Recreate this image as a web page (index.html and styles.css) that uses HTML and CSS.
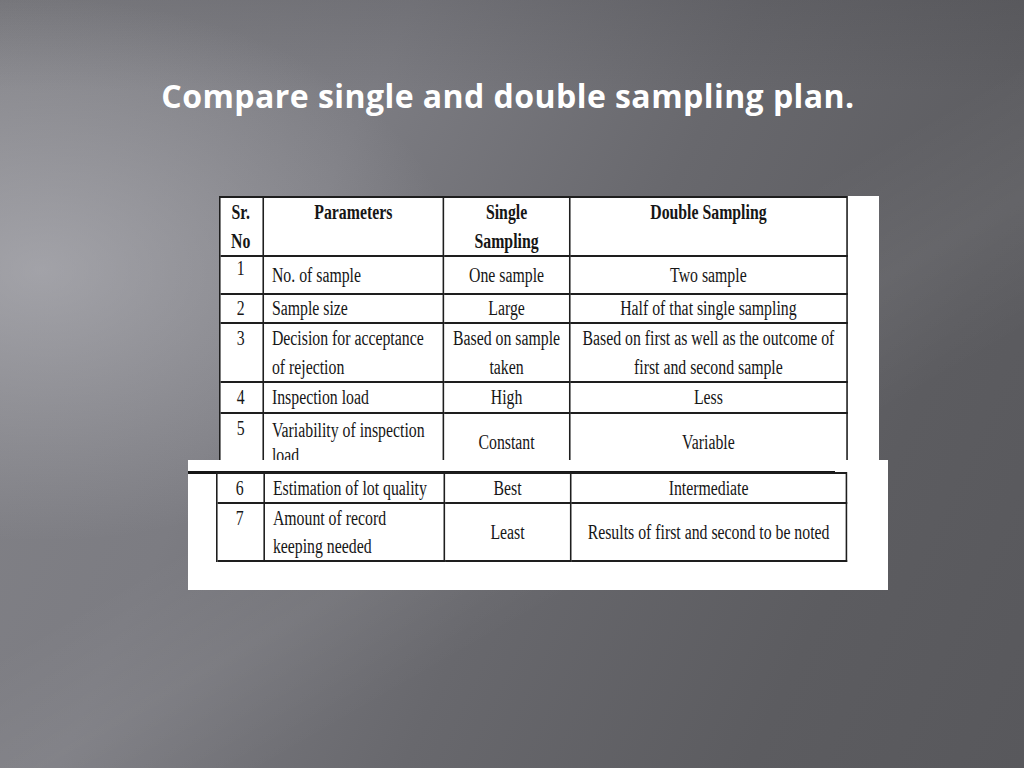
FILE: index.html
```html
<!DOCTYPE html>
<html lang="en">
<head>
<meta charset="utf-8">
<title>Compare single and double sampling plan.</title>
<link rel="stylesheet" href="styles.css">
</head>
<body>
<main class="slide">
  <h1 class="title">Compare single and double sampling plan.</h1>
  <div class="figure">
    <div class="panel panel-top">
      <table class="grid grid-top">
        <colgroup>
          <col class="c-no"><col class="c-param"><col class="c-single"><col class="c-double">
        </colgroup>
        <tr class="r-head">
          <th class="num">Sr.<br>No</th>
          <th>Parameters</th>
          <th>Single<br>Sampling</th>
          <th>Double Sampling</th>
        </tr>
        <tr class="r-38">
          <td class="num">1</td>
          <td class="param">No. of sample</td>
          <td>One sample</td>
          <td>Two sample</td>
        </tr>
        <tr class="r-29">
          <td class="num">2</td>
          <td class="param">Sample size</td>
          <td>Large</td>
          <td>Half of that single sampling</td>
        </tr>
        <tr class="r-59">
          <td class="num">3</td>
          <td class="param">Decision for acceptance<br>of rejection</td>
          <td>Based on sample<br>taken</td>
          <td>Based on first as well as the outcome of<br>first and second sample</td>
        </tr>
        <tr class="r-31">
          <td class="num">4</td>
          <td class="param">Inspection load</td>
          <td>High</td>
          <td>Less</td>
        </tr>
        <tr class="r-58 r-tight">
          <td class="num">5</td>
          <td class="param">Variability of inspection<br>load</td>
          <td>Constant</td>
          <td>Variable</td>
        </tr>
      </table>
    </div>
    <div class="panel panel-bottom">
      <div class="rule"></div>
      <table class="grid grid-bottom">
        <colgroup>
          <col class="c-no2"><col class="c-param"><col class="c-single"><col class="c-double2">
        </colgroup>
        <tr class="r-30 r-28">
          <td class="num">6</td>
          <td class="param">Estimation of lot quality</td>
          <td>Best</td>
          <td>Intermediate</td>
        </tr>
        <tr class="r-58 r-28">
          <td class="num">7</td>
          <td class="param">Amount of record<br>keeping needed</td>
          <td>Least</td>
          <td>Results of first and second to be noted</td>
        </tr>
      </table>
    </div>
  </div>
</main>
</body>
</html>
```

FILE: styles.css
```css
* { box-sizing: border-box; }

html, body {
  margin: 0;
  padding: 0;
}

body {
  width: 1024px;
  height: 768px;
  overflow: hidden;
  background:
    radial-gradient(ellipse 520px 340px at 40px 270px, rgba(196, 196, 202, 0.5), rgba(196, 196, 202, 0) 80%),
    linear-gradient(150deg, rgba(255, 255, 255, 0) 48%, rgba(255, 255, 255, 0.05) 58%, rgba(255, 255, 255, 0) 68%),
    linear-gradient(180deg, rgba(60, 60, 64, 0.18) 0%, rgba(60, 60, 64, 0) 12%),
    linear-gradient(115deg, #838388 0%, #7c7c82 30%, #68686d 55%, #5c5c60 80%, #58585c 100%);
}

.slide {
  width: 1024px;
  height: 768px;
  display: flex;
  flex-direction: column;
}

.title {
  margin: 76px 0 0 0;
  padding-right: 8px;
  text-align: center;
  font-family: "Open Sans", "Noto Sans", sans-serif;
  font-weight: 700;
  font-size: 32px;
  letter-spacing: 0.45px;
  line-height: 40px;
  color: #ffffff;
}

.figure {
  margin-top: 80px;
  display: flex;
  flex-direction: column;
}

.panel {
  background: #ffffff;
  overflow: hidden;
}

.panel-top {
  margin-left: 219px;
  width: 660px;
  height: 264px;
}

.panel-bottom {
  margin-left: 188px;
  width: 700px;
  height: 130px;
  padding-top: 11px;
}

.rule {
  width: 647px;
  height: 3px;
  background: #161616;
  margin-bottom: -2px;
}

.grid {
  border-collapse: separate;
  border-spacing: 0;
  table-layout: fixed;
  border-left: 2px solid #1e1e1e;
  border-top: 2px solid #1e1e1e;
  transform: scaleX(0.79);
  transform-origin: 0 0;
  font-family: "Liberation Serif", "Times New Roman", serif;
  font-size: 20px;
  line-height: 28.5px;
  color: #161616;
}

.grid-top {
  width: 796px;
}

.grid-bottom {
  margin-left: 28px;
  width: 799px;
}

.c-no { width: 55px; }
.c-no2 { width: 60px; }
.c-param { width: 228px; }
.c-single { width: 160px; }
.c-double { width: 351px; }
.c-double2 { width: 349px; }

.grid th,
.grid td {
  border-right: 2px solid #1e1e1e;
  border-bottom: 2px solid #1e1e1e;
  padding: 0 4px;
  text-align: center;
  vertical-align: middle;
  white-space: nowrap;
  overflow: hidden;
}

.grid th {
  font-weight: 700;
  vertical-align: top;
}

.grid td.num,
.grid th.num {
  vertical-align: top;
  padding: 0 2px 0 0;
}

.grid td.param {
  text-align: left;
  padding-left: 10px;
}

.r-head { height: 59px; }
.r-38 { height: 38px; }
.r-38 td.num { line-height: 22px; }
.r-29 { height: 29px; }
.r-29 td { line-height: 27px; }
.r-59 { height: 59px; }
.r-31 { height: 31px; }
.r-58 { height: 58px; }
.r-tight td { line-height: 25px; }
.r-tight td.num,
.r-tight td.param { padding-top: 2px; }
.r-30 { height: 30px; }
.r-28 td { line-height: 28px; }
```
